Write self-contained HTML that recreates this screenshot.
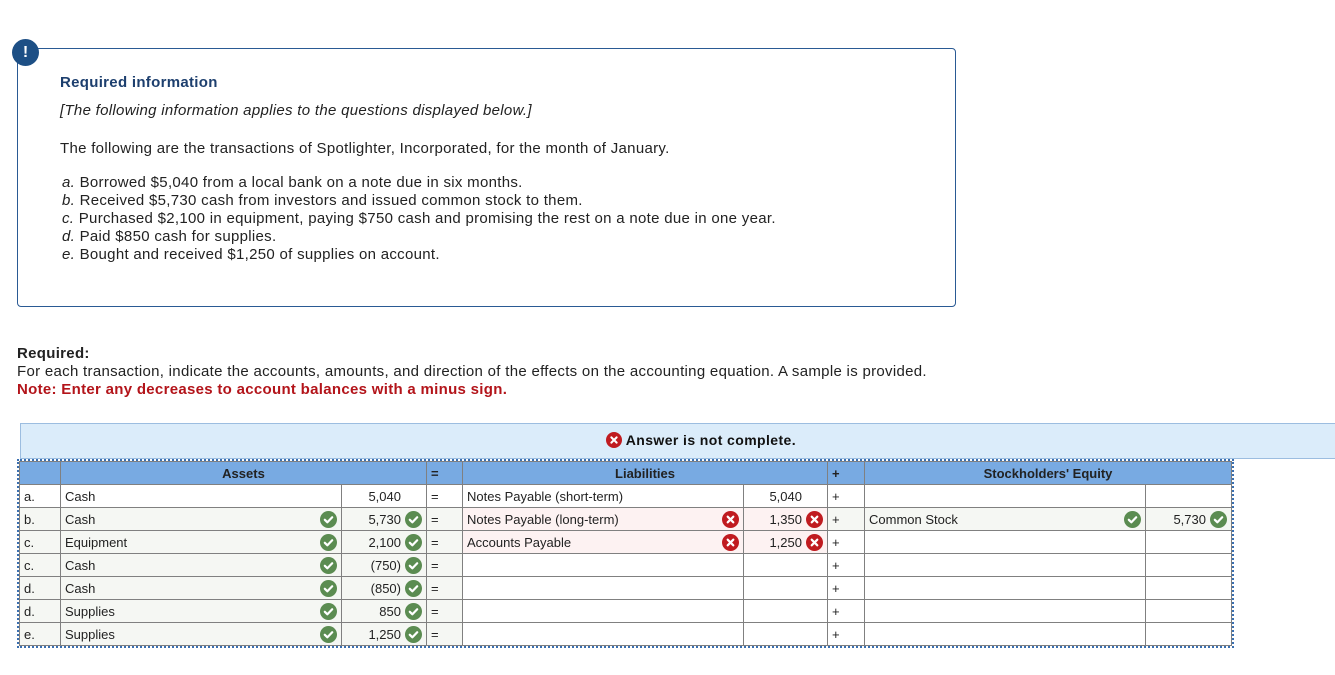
<!DOCTYPE html>
<html><head><meta charset="utf-8">
<style>
body{margin:0;width:1335px;height:675px;background:#fff;font-family:"Liberation Sans",Arial,sans-serif;color:#222;position:relative;overflow:hidden}
.abs{position:absolute}
.box{left:17px;top:48px;width:937px;height:257px;border:1px solid #2a5a94;border-radius:4px}
.bang{left:12px;top:39px;width:27px;height:27px;border-radius:50%;background:#1d4f85;color:#fff;font-weight:bold;font-size:16px;text-align:center;line-height:27px}
.t{font-size:15px;white-space:nowrap;letter-spacing:0.3px}
table{position:absolute;left:19px;top:461px;border-collapse:collapse;table-layout:fixed;font-size:13px;outline:2px dotted #3a6fb0}
td,th{border:1px solid #808080;height:22px;padding:0 4px;white-space:nowrap;overflow:hidden;position:relative;vertical-align:middle}
th{background:#78aae2;font-weight:bold;color:#222;font-size:13px}
.r{text-align:right;padding-right:25px}
.ok{background:#f5f7f3}
.bad{background:#fdf2f2}
.ic{position:absolute;right:4px;top:3px;width:17px;height:17px}
</style></head><body>
<svg width="0" height="0" style="position:absolute">
<defs>
<symbol id="g" viewBox="0 0 17 17"><circle cx="8.5" cy="8.5" r="8.5" fill="#5b8c51"/><path d="M4.8 8.8l2.6 2.5 4.8-5" stroke="#fff" stroke-width="2.2" fill="none" stroke-linecap="round" stroke-linejoin="round"/></symbol>
<symbol id="x" viewBox="0 0 17 17"><circle cx="8.5" cy="8.5" r="8.5" fill="#c01b20"/><path d="M5.7 5.7l5.6 5.6M11.3 5.7l-5.6 5.6" stroke="#fff" stroke-width="2.2" stroke-linecap="round"/></symbol>
</defs></svg>
<div class="abs box"></div>
<div class="abs bang">!</div>
<div class="abs t" style="left:60px;top:74px;font-weight:bold;color:#1d3f6e">Required information</div>
<div class="abs t" style="left:60px;top:102px;font-style:italic">[The following information applies to the questions displayed below.]</div>
<div class="abs t" style="left:60px;top:140px">The following are the transactions of Spotlighter, Incorporated, for the month of January.</div>
<div class="abs t" style="left:62px;top:174px;line-height:18px">
<i>a.</i> Borrowed $5,040 from a local bank on a note due in six months.<br>
<i>b.</i> Received $5,730 cash from investors and issued common stock to them.<br>
<i>c.</i> Purchased $2,100 in equipment, paying $750 cash and promising the rest on a note due in one year.<br>
<i>d.</i> Paid $850 cash for supplies.<br>
<i>e.</i> Bought and received $1,250 of supplies on account.</div>
<div class="abs t" style="left:17px;top:345px;font-weight:bold">Required:</div>
<div class="abs t" style="left:17px;top:363px">For each transaction, indicate the accounts, amounts, and direction of the effects on the accounting equation. A sample is provided.</div>
<div class="abs t" style="left:17px;top:381px;font-weight:bold;color:#b3141a">Note: Enter any decreases to account balances with a minus sign.</div>
<div class="abs" style="left:20px;top:423px;width:1315px;height:34px;background:#dbecfa;border:1px solid #9cbde0;border-right:none"></div>
<div class="abs" style="left:606px;top:432px;font-size:14px;font-weight:bold;color:#111;letter-spacing:0.4px"><svg width="16" height="16" style="vertical-align:-3px"><use href="#x"/></svg> Answer is not complete.</div>
<table>
<colgroup><col style="width:41px"><col style="width:281px"><col style="width:85px"><col style="width:36px"><col style="width:281px"><col style="width:84px"><col style="width:37px"><col style="width:281px"><col style="width:86px"></colgroup>
<tr><th></th><th colspan="2">Assets</th><th style="text-align:left">=</th><th colspan="2">Liabilities</th><th style="text-align:left">+</th><th colspan="2">Stockholders' Equity</th></tr>
<tr><td>a.</td><td>Cash</td><td class="r">5,040</td><td>=</td><td>Notes Payable (short-term)</td><td class="r">5,040</td><td>+</td><td></td><td></td></tr>
<tr class="ok"><td>b.</td><td>Cash<svg class="ic"><use href="#g"/></svg></td><td class="r">5,730<svg class="ic"><use href="#g"/></svg></td><td>=</td><td class="bad">Notes Payable (long-term)<svg class="ic"><use href="#x"/></svg></td><td class="r bad">1,350<svg class="ic"><use href="#x"/></svg></td><td>+</td><td>Common Stock<svg class="ic"><use href="#g"/></svg></td><td class="r">5,730<svg class="ic"><use href="#g"/></svg></td></tr>
<tr class="ok"><td>c.</td><td>Equipment<svg class="ic"><use href="#g"/></svg></td><td class="r">2,100<svg class="ic"><use href="#g"/></svg></td><td>=</td><td class="bad">Accounts Payable<svg class="ic"><use href="#x"/></svg></td><td class="r bad">1,250<svg class="ic"><use href="#x"/></svg></td><td style="background:#fff">+</td><td style="background:#fff"></td><td style="background:#fff"></td></tr>
<tr class="ok"><td>c.</td><td>Cash<svg class="ic"><use href="#g"/></svg></td><td class="r">(750)<svg class="ic"><use href="#g"/></svg></td><td>=</td><td style="background:#fff"></td><td style="background:#fff"></td><td style="background:#fff">+</td><td style="background:#fff"></td><td style="background:#fff"></td></tr>
<tr class="ok"><td>d.</td><td>Cash<svg class="ic"><use href="#g"/></svg></td><td class="r">(850)<svg class="ic"><use href="#g"/></svg></td><td>=</td><td style="background:#fff"></td><td style="background:#fff"></td><td style="background:#fff">+</td><td style="background:#fff"></td><td style="background:#fff"></td></tr>
<tr class="ok"><td>d.</td><td>Supplies<svg class="ic"><use href="#g"/></svg></td><td class="r">850<svg class="ic"><use href="#g"/></svg></td><td>=</td><td style="background:#fff"></td><td style="background:#fff"></td><td style="background:#fff">+</td><td style="background:#fff"></td><td style="background:#fff"></td></tr>
<tr class="ok"><td>e.</td><td>Supplies<svg class="ic"><use href="#g"/></svg></td><td class="r">1,250<svg class="ic"><use href="#g"/></svg></td><td>=</td><td style="background:#fff"></td><td style="background:#fff"></td><td style="background:#fff">+</td><td style="background:#fff"></td><td style="background:#fff"></td></tr>
</table>
</body></html>
